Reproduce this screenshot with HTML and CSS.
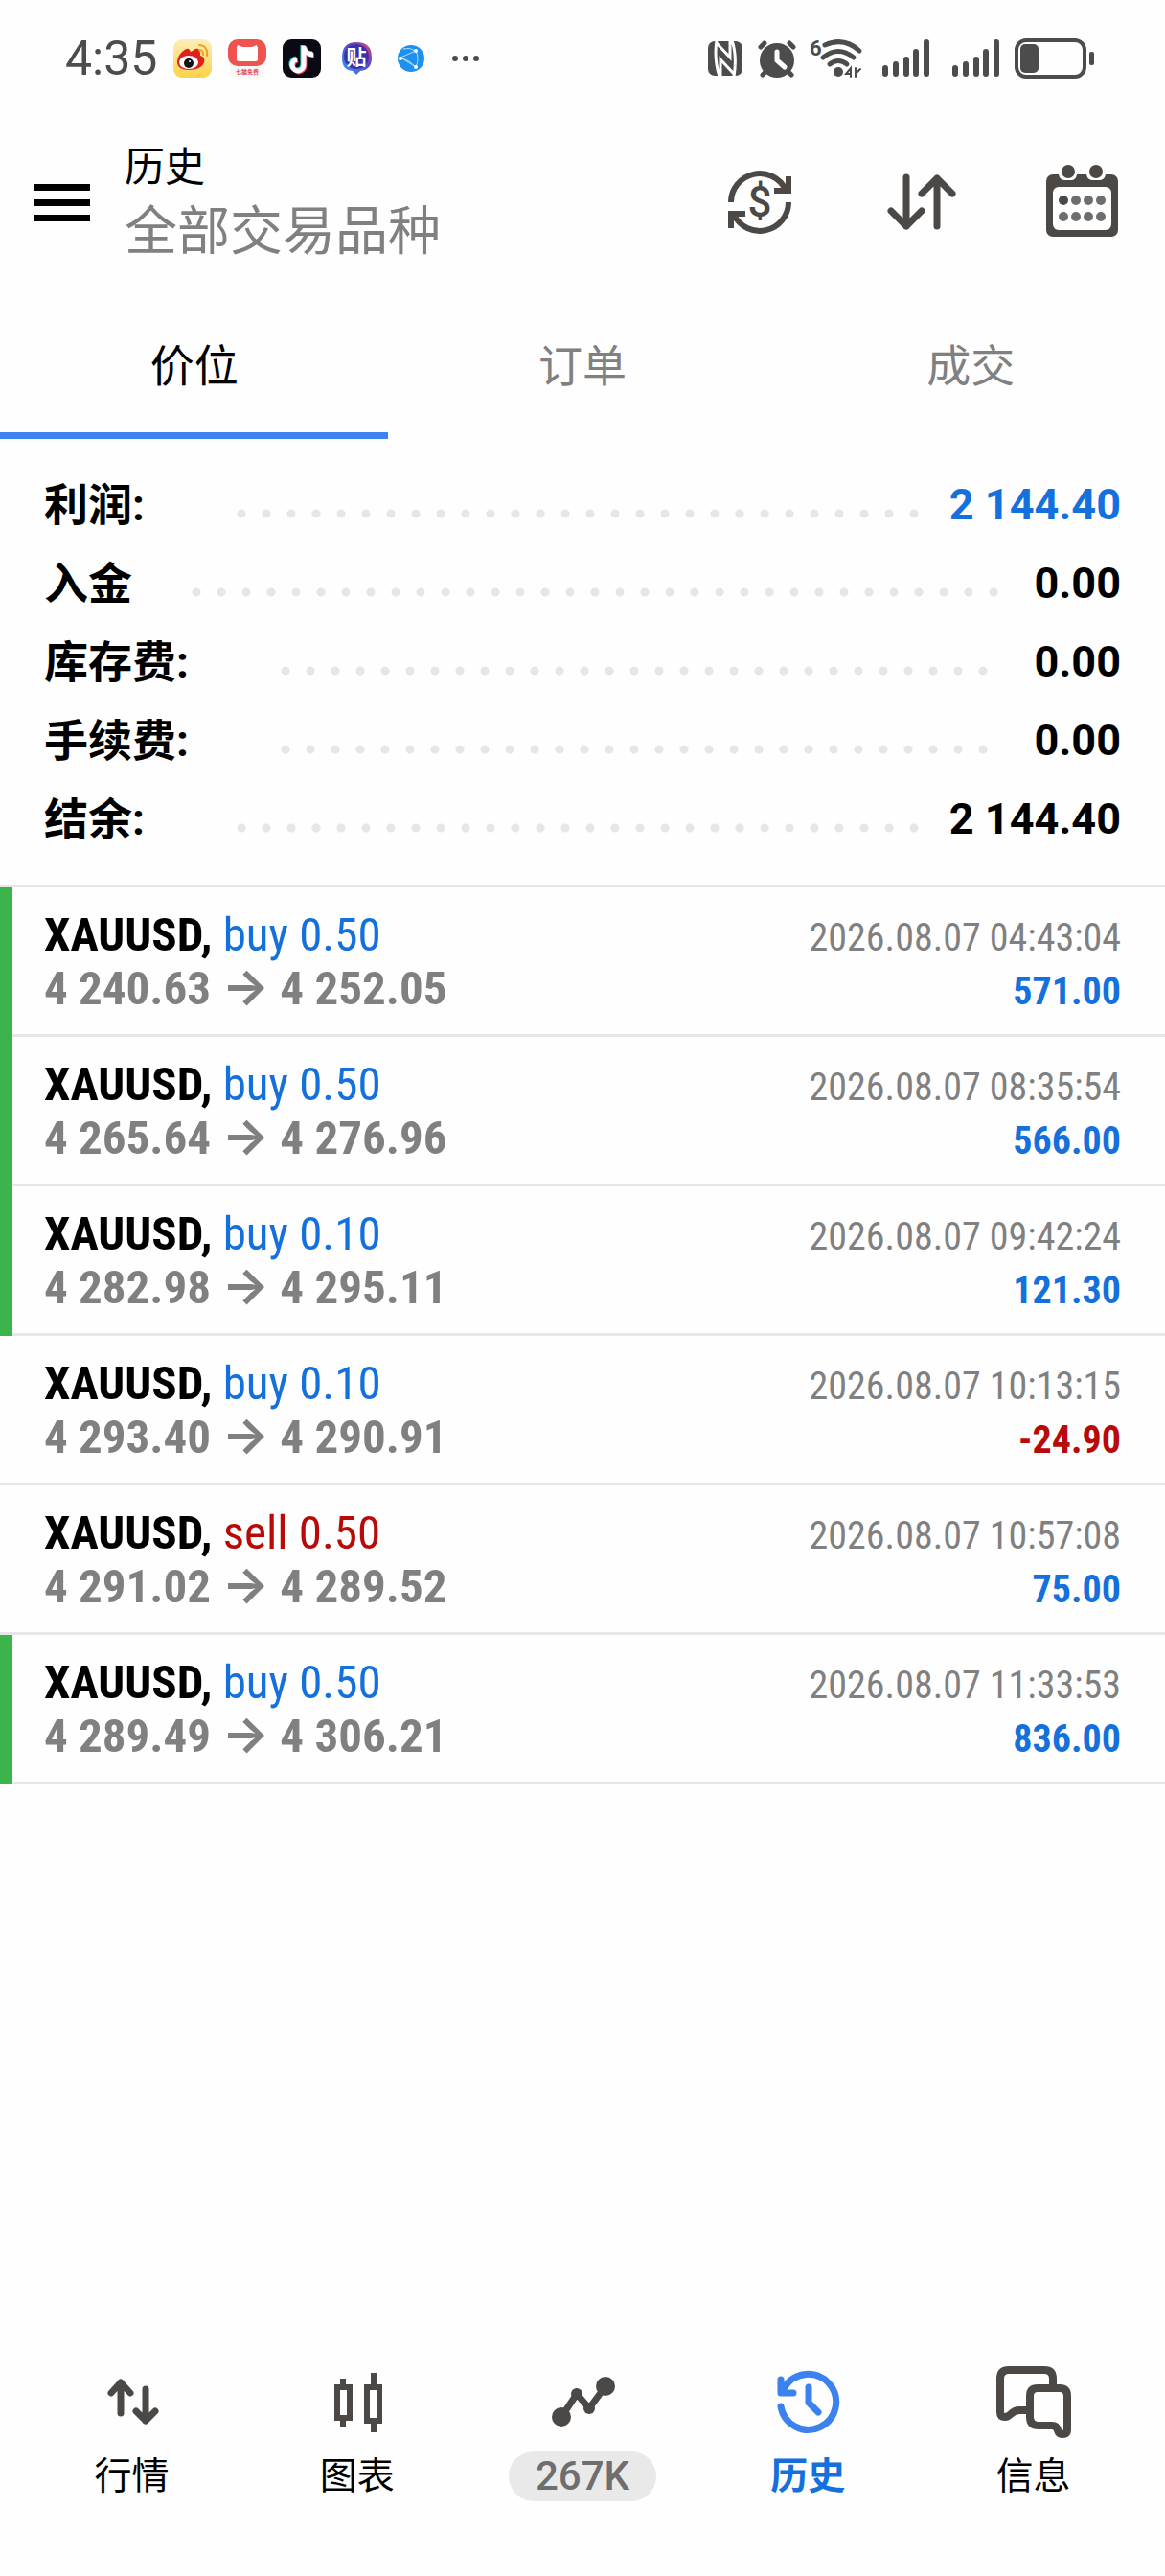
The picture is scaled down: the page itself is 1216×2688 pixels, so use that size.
FILE: index.html
```html
<!DOCTYPE html>
<html lang="zh-CN">
	<head>
		<meta charset="UTF-8" />
		<meta name="viewport" content="width=device-width, initial-scale=1.0" />
		<title>历史</title>
		<link rel="stylesheet" href="styles.css">
	</head>
	<body>
		<!-- 状态栏 -->
		<div class="status">
			<div class="status-left">
				<span class="time">4:35</span>
				<svg class="app" viewBox="0 0 40 40">
					<defs>
						<linearGradient id="weibo" x1="0" y1="0" x2="0" y2="1">
							<stop offset="0" stop-color="#fbeeb8" />
							<stop offset="1" stop-color="#fdd24a" />
						</linearGradient>
					</defs>
					<rect width="40" height="40" rx="9" fill="url(#weibo)" />
					<path d="M4 24C4 17 10 11 14 10C17 9 17 12 18 13C22 11 24 8 27 11C28 13 28 15 28 17C32 18 33 21 32 24C31 29 24 32 16 32C9 32 4 29 4 24Z" fill="#e0201b" />
					<ellipse cx="16" cy="24" rx="10" ry="7" fill="#fff" />
					<circle cx="16" cy="25" r="5" fill="#111" />
					<circle cx="17" cy="23" r="1" fill="#fff" />
					<path d="M27 6C33 6 36 11 35 17M27 11C30 11 31 13 31 16" fill="none" stroke="#f0a024" stroke-width="2" stroke-linecap="round" />
				</svg>
				<svg class="app" viewBox="0 0 40 40">
					<rect y="18" x="2" width="36" height="22" rx="6" fill="#faf7f7" />
					<rect width="40" height="28" rx="10" fill="#ee5350" />
					<path d="M10 6L15 8H25L30 6L31 9V21Q31 23 29 23H11Q9 23 9 21V9Z" fill="#fff" />
					<text x="20" y="36" class="app-name">七猫免费</text>
				</svg>
				<svg class="app" viewBox="0 0 40 40">
					<rect width="40" height="40" rx="9" fill="#0b0a14" />
					<g fill="none" stroke-width="5">
						<path d="M21 6V26A6 6 0 1 1 14 20M21 7C22 12 26 15 31 15" stroke="#25e5e0" />
						<path d="M23 8V28A6 6 0 1 1 16 22M23 9C24 14 28 17 33 17" stroke="#f8355c" />
						<path d="M22 7V27A6 6 0 1 1 15 21M22 8C23 13 27 16 32 16" stroke="#fff" />
					</g>
				</svg>
				<svg class="app" viewBox="0 0 40 40">
					<defs>
						<linearGradient id="tieba" x1="1" y1="0" x2="0" y2="1">
							<stop offset="0" stop-color="#f0456b" />
							<stop offset="0.4" stop-color="#5b46c8" />
							<stop offset="1" stop-color="#2f9df5" />
						</linearGradient>
					</defs>
					<path d="M20 3C31 3 36 8 36 19C36 28 32 32 24 33L20 37L16 33C8 32 5 28 5 19C5 8 10 3 20 3Z" fill="url(#tieba)" />
					<circle cx="20" cy="18" r="13" fill="#3f31a5" />
					<text x="20" y="26" class="app-tie">贴</text>
				</svg>
				<svg class="app" viewBox="0 0 40 40">
					<circle cx="20" cy="20" r="14" fill="#2090ee" />
					<path d="M25 12L9 19L25 29M12 10Q18 8 25 12Q29 20 25 29Q19 22 9 19" fill="none" stroke="#a9e2ff" stroke-width="1" />
					<circle cx="25" cy="12" r="2" fill="#fff" />
					<circle cx="9" cy="20" r="2" fill="#fff" />
					<circle cx="25" cy="29" r="2" fill="#fff" />
				</svg>
				<svg class="app" viewBox="0 0 40 40" fill="#4c4c4c">
					<circle cx="9" cy="20" r="3" />
					<circle cx="20" cy="20" r="3" />
					<circle cx="31" cy="20" r="3" />
				</svg>
			</div>
			<div class="status-right">
				<svg width="38" height="42" viewBox="0 0 38 42">
					<rect y="3" width="36" height="36" rx="7" fill="#4c4c4c" />
					<path d="M9 2C7 15 8 28 12 40M25 2C29 14 29 28 27 40M9 5L23 20V3M27 37L13 22V39" fill="none" stroke="#fff" stroke-width="3" />
				</svg>
				<svg width="40" height="42" viewBox="0 0 40 42" fill="none" stroke="#4c4c4c" stroke-width="5" stroke-linecap="round">
					<circle cx="20" cy="23" r="18" fill="#4c4c4c" stroke="none" />
					<path d="M3 9L7 5M33 5L37 9M9 34L5 38M31 34L35 38" />
					<path d="M20 14V23L28 30" stroke="#fff" />
				</svg>
				<svg class="wifi" width="62" height="42" viewBox="0 0 62 42" fill="none" stroke="#4c4c4c" stroke-width="5" stroke-linecap="round">
					<text x="0" y="18" class="wifi-num">6</text>
					<path d="M16 7Q36 -2 52 13M14 20Q30 7 46 20M21 27Q30 20 39 27" />
					<circle cx="30" cy="35" r="5" fill="#4c4c4c" stroke="none" />
					<path d="M43 40V31L38 37H43M48 31V40M53 32L48 37" stroke-width="2" />
				</svg>
				<svg width="124" height="42" viewBox="0 0 124 42" stroke="#4c4c4c" stroke-width="6" stroke-linecap="round">
					<path d="M3 31V37M14 27V37M25 22V37M35 14V37M46 4V37" />
					<path d="M76 31V37M87 27V37M98 22V37M108 14V37M119 4V37" />
				</svg>
				<svg width="84" height="42" viewBox="0 0 84 42">
					<rect x="2" y="2" width="71" height="38" rx="10" fill="none" stroke="#4c4c4c" stroke-width="4" />
					<rect x="6" y="6" width="19" height="30" rx="5" fill="#4c4c4c" />
					<rect x="78" y="14" width="5" height="14" rx="2" fill="#4c4c4c" />
				</svg>
			</div>
		</div>

		<!-- 头部 -->
		<header class="header">
			<button class="menu" aria-label="菜单">
				<span></span>
				<span></span>
				<span></span>
			</button>
			<div class="header-title">
				<h1>历史</h1>
				<p>全部交易品种</p>
			</div>
			<div class="header-tools">
				<button aria-label="品种">
					<svg class="icon" viewBox="0 0 80 80" fill="none" stroke="#4b4846" stroke-width="6">
						<path d="M9 40A30 30 0 0 1 66 27M69 13V28H54" />
						<path d="M69 40A30 30 0 0 1 12 53M9 67V52H24" />
						<text x="39" y="55" class="dollar">$</text>
					</svg>
				</button>
				<button aria-label="排序">
					<svg class="icon" viewBox="0 0 80 80" fill="none" stroke="#4b4846" stroke-width="7" stroke-linecap="round" stroke-linejoin="round">
						<path d="M24 14V65M8 49L24 65L40 49" />
						<path d="M56 65V15M40 31L56 15L72 31" />
					</svg>
				</button>
				<button aria-label="日期">
					<svg class="icon" viewBox="0 0 80 80" fill="#4b4846">
						<rect x="2" y="11" width="75" height="65" rx="7" />
						<rect x="9" y="24" width="61" height="45" rx="6" fill="#fff" />
						<path d="M15 10V11Q16 17 22 17H28Q33 17 34 11V10ZM44 10V11Q45 17 51 17H57Q63 17 64 11V10Z" fill="#fff" />
						<circle cx="25" cy="8" r="7" />
						<circle cx="54" cy="8" r="7" />
						<circle cx="20" cy="38" r="5" />
						<g fill="#6e6e6e">
							<circle cx="33" cy="38" r="5" />
							<circle cx="46" cy="38" r="5" />
							<circle cx="59" cy="38" r="5" />
							<circle cx="20" cy="55" r="5" />
							<circle cx="33" cy="55" r="5" />
							<circle cx="46" cy="55" r="5" />
							<circle cx="59" cy="55" r="5" />
						</g>
					</svg>
				</button>
			</div>
		</header>

		<!-- 标签 -->
		<div class="tabs">
			<button class="active">价位</button>
			<button>订单</button>
			<button>成交</button>
		</div>

		<!-- 汇总 -->
		<dl class="summary">
			<div>
				<dt>利润:</dt>
				<dd class="blue">2 144.40</dd>
			</div>
			<div class="plain">
				<dt>入金</dt>
				<dd>0.00</dd>
			</div>
			<div class="short">
				<dt>库存费:</dt>
				<dd>0.00</dd>
			</div>
			<div class="short">
				<dt>手续费:</dt>
				<dd>0.00</dd>
			</div>
			<div>
				<dt>结余:</dt>
				<dd>2 144.40</dd>
			</div>
		</dl>

		<!-- 历史列表 -->
		<ul class="list">
			<li class="tp">
				<div class="deal">
					<p><b>XAUUSD,</b> <span class="blue">buy 0.50</span></p>
					<p class="price">4 240.63 <i>→</i> 4 252.05</p>
				</div>
				<div class="result">
					<p>2026.08.07 04:43:04</p>
					<p class="profit blue">571.00</p>
				</div>
			</li>
			<li class="tp">
				<div class="deal">
					<p><b>XAUUSD,</b> <span class="blue">buy 0.50</span></p>
					<p class="price">4 265.64 <i>→</i> 4 276.96</p>
				</div>
				<div class="result">
					<p>2026.08.07 08:35:54</p>
					<p class="profit blue">566.00</p>
				</div>
			</li>
			<li class="tp">
				<div class="deal">
					<p><b>XAUUSD,</b> <span class="blue">buy 0.10</span></p>
					<p class="price">4 282.98 <i>→</i> 4 295.11</p>
				</div>
				<div class="result">
					<p>2026.08.07 09:42:24</p>
					<p class="profit blue">121.30</p>
				</div>
			</li>
			<li>
				<div class="deal">
					<p><b>XAUUSD,</b> <span class="blue">buy 0.10</span></p>
					<p class="price">4 293.40 <i>→</i> 4 290.91</p>
				</div>
				<div class="result">
					<p>2026.08.07 10:13:15</p>
					<p class="profit red">-24.90</p>
				</div>
			</li>
			<li>
				<div class="deal">
					<p><b>XAUUSD,</b> <span class="red">sell 0.50</span></p>
					<p class="price">4 291.02 <i>→</i> 4 289.52</p>
				</div>
				<div class="result">
					<p>2026.08.07 10:57:08</p>
					<p class="profit blue">75.00</p>
				</div>
			</li>
			<li class="tp">
				<div class="deal">
					<p><b>XAUUSD,</b> <span class="blue">buy 0.50</span></p>
					<p class="price">4 289.49 <i>→</i> 4 306.21</p>
				</div>
				<div class="result">
					<p>2026.08.07 11:33:53</p>
					<p class="profit blue">836.00</p>
				</div>
			</li>
		</ul>

		<!-- 底部导航 -->
		<nav class="nav">
			<a href="#">
				<svg class="icon" viewBox="0 0 80 80" fill="none" stroke="#4b4846" stroke-width="7" stroke-linecap="round" stroke-linejoin="round">
					<path d="M28 51V19M18 30L28 19L38 30" />
					<path d="M54 26V59M44 49L54 59L64 49" />
				</svg>
				<span>行情</span>
			</a>
			<a href="#">
				<svg class="icon" viewBox="0 0 80 80" fill="none" stroke="#4b4846" stroke-width="6">
					<path d="M25 15V24M25 56V65M57 9V24M57 59V71" />
					<rect x="19" y="24" width="13" height="32" />
					<rect x="50" y="24" width="13" height="35" />
				</svg>
				<span>图表</span>
			</a>
			<a href="#">
				<svg class="icon" viewBox="0 0 80 80" fill="#4b4846">
					<path d="M18 55L34 31L47 46L64 23" fill="none" stroke="#4b4846" stroke-width="7" />
					<circle cx="18" cy="55" r="10" />
					<circle cx="34" cy="31" r="6" />
					<circle cx="47" cy="46" r="6" />
					<circle cx="64" cy="23" r="10" />
				</svg>
				<span class="badge">267K</span>
			</a>
			<a href="#" class="active">
				<svg class="icon" viewBox="0 0 80 80" fill="none" stroke="#3b82ee" stroke-width="7" stroke-linecap="round" stroke-linejoin="round">
					<path d="M12 44A29 29 0 1 0 16 24M12 16V30H25" />
					<path d="M41 24V40L51 50" />
				</svg>
				<span>历史</span>
			</a>
			<a href="#">
				<svg class="icon" viewBox="0 0 80 80" fill="none" stroke="#4b4846" stroke-width="8">
					<path d="M61 24V15Q61 6 52 6H15Q6 6 6 15V50Q6 55 11 55Q14 55 17 52Q21 48 26 48H36" />
					<path d="M45 25H68Q76 25 76 33V68Q76 73 71 73Q67 73 66 69Q65 64 60 64H46Q37 64 37 55V33Q37 25 45 25Z" />
				</svg>
				<span>信息</span>
			</a>
		</nav>
	</body>
</html>
```
FILE: styles.css
```css
* {
	box-sizing: border-box;
	margin: 0;
	padding: 0;
}

body {
	display: flex;
	flex-direction: column;
	min-height: 100vh;
	background-color: #fefefe;
	color: #000;
	font-family: Roboto, 'Noto Sans CJK SC', sans-serif;
}

button {
	appearance: none;
	border: none;
	background: none;
	font-family: inherit;
	cursor: pointer;
}

svg {
	display: block;
}

.blue {
	color: #1470dc;
}

.red {
	color: #b90a0a;
}

.icon {
	width: 80px;
	height: 80px;
}

/* 状态栏 */
.status {
	display: flex;
	justify-content: space-between;
	align-items: center;
	height: 118px;
	padding: 4px 73px 0 68px;
}

.status-left {
	display: flex;
	align-items: center;
	gap: 17px;
}

.status-right {
	display: flex;
	align-items: center;
	gap: 14px;
}

.time {
	font-size: 50px;
	line-height: 60px;
	color: #4c4c4c;
}

.app {
	width: 40px;
	height: 40px;
}

.app-name {
	font-size: 6px;
	font-weight: 700;
	text-anchor: middle;
	fill: #e0504e;
}

.app-tie {
	font-size: 21px;
	font-weight: 700;
	text-anchor: middle;
	fill: #fff;
}

.wifi {
	overflow: visible;
}

.wifi-num {
	font-size: 22px;
	font-weight: 700;
	fill: #4c4c4c;
	stroke: none;
}

/* 头部 */
.header {
	display: flex;
	align-items: center;
	height: 186px;
	padding: 0 46px 0 36px;
}

.menu {
	display: flex;
	flex-direction: column;
	gap: 9px;
	width: 58px;
}

.menu span {
	height: 7px;
	background-color: #000;
}

.header-title {
	flex: 1;
	margin-left: 36px;
}

.header-title h1 {
	font-size: 42px;
	font-weight: 400;
	line-height: 60px;
}

.header-title p {
	font-size: 55px;
	line-height: 72px;
	color: #808080;
}

.header-tools {
	display: flex;
	gap: 88px;
}

.dollar {
	font-size: 44px;
	font-weight: 500;
	text-anchor: middle;
	fill: #4b4846;
	stroke: none;
}

/* 标签 */
.tabs {
	display: flex;
}

.tabs button {
	flex: 1;
	height: 154px;
	border-bottom: 7px solid transparent;
	font-size: 46px;
	color: #808080;
}

.tabs .active {
	border-color: #3d83f2;
	color: #000;
}

/* 汇总 */
.summary {
	padding: 28px 46px 27px;
	font-size: 46px;
	font-weight: 700;
	line-height: 82px;
}

.summary div {
	display: flex;
}

/* 虚线点 */
.summary div::after {
	content: '';
	order: 1;
	flex: 1;
	height: 82px;
	margin: 0 22px 0 88px;
	background: radial-gradient(circle, #e6e6e6 4px, transparent 5px) 0 37px / 26px 26px repeat-x;
}

.summary .plain::after {
	margin: 0 28px 0 54px;
}

.summary .short::after {
	margin-right: 40px;
}

.summary dd {
	order: 2;
	font-size: 45px;
}

/* 历史列表 */
.list {
	list-style: none;
	border-top: 3px solid #e6e6e6;
	font-family: 'Roboto Condensed', 'Liberation Sans Narrow', Roboto, sans-serif;
	line-height: 56px;
}

.list li {
	display: flex;
	justify-content: space-between;
	align-items: baseline;
	height: 156px;
	padding: 22px 46px 0;
	box-shadow: inset 0 -3px #e6e6e6;
}

.list .tp {
	box-shadow: inset 13px 0 #3ab44b, inset 0 -3px #e6e6e6;
}

.deal {
	font-size: 49px;
}

.price {
	font-weight: 700;
	color: #808080;
}

.price i {
	font-family: Inter, sans-serif;
	font-size: 52px;
	font-style: normal;
	line-height: 0;
}

.result {
	font-size: 40px;
	text-align: right;
	color: #808080;
}

.profit {
	font-weight: 700;
}

.result .blue {
	color: #1470dc;
}

.result .red {
	color: #b90a0a;
}

/* 底部导航 */
.nav {
	display: flex;
	margin-top: auto;
	padding: 0 20px 78px;
}

.nav a {
	flex: 1;
	display: flex;
	flex-direction: column;
	align-items: center;
	gap: 11px;
	font-size: 39px;
	line-height: 52px;
	color: #000;
	text-decoration: none;
}

.nav .active {
	color: #1470dc;
	font-weight: 700;
}

.nav .badge {
	padding: 0 28px;
	border-radius: 26px;
	background-color: #e9e9e9;
	font-size: 42px;
	font-weight: 500;
	color: #6e6e6e;
}
```
